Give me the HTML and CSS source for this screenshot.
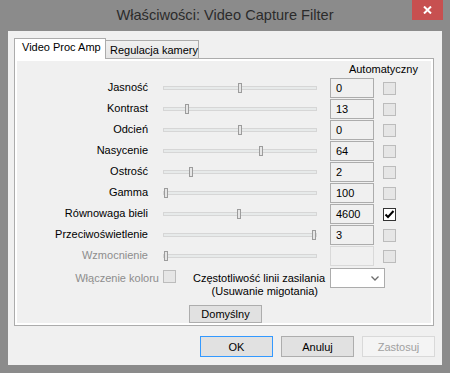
FILE: index.html
```html
<!DOCTYPE html>
<html>
<head>
<meta charset="utf-8"/>
<link rel="stylesheet" href="styles.css">
<title>Właściwości: Video Capture Filter</title>
</head>
<body>
<div class="window">
  <div class="titlebar">
    <span class="title">Właściwości: Video Capture Filter</span>
    <span class="close">
      <svg width="9" height="8" viewBox="0 0 9 8"><path d="M1 0.5 L8 7.5 M8 0.5 L1 7.5" stroke="#fff" stroke-width="2"/></svg>
    </span>
  </div>

  <div class="client">
    <div class="tabs">
      <div class="tab active">Video Proc Amp</div>
      <div class="tab">Regulacja kamery</div>
    </div>

    <div class="panel">
      <div class="page">
        <div class="autohead">Automatyczny</div>

        <div class="grid">
          <div class="lbl">Jasność</div>
          <div class="track"><span class="thumb" style="--p:0.5"></span></div>
          <div class="val">0</div>
          <div class="chk"></div>

          <div class="lbl">Kontrast</div>
          <div class="track"><span class="thumb" style="--p:0.14"></span></div>
          <div class="val">13</div>
          <div class="chk"></div>

          <div class="lbl">Odcień</div>
          <div class="track"><span class="thumb" style="--p:0.5"></span></div>
          <div class="val">0</div>
          <div class="chk"></div>

          <div class="lbl">Nasycenie</div>
          <div class="track"><span class="thumb" style="--p:0.64"></span></div>
          <div class="val">64</div>
          <div class="chk"></div>

          <div class="lbl">Ostrość</div>
          <div class="track"><span class="thumb" style="--p:0.17"></span></div>
          <div class="val">2</div>
          <div class="chk"></div>

          <div class="lbl">Gamma</div>
          <div class="track"><span class="thumb" style="--p:0"></span></div>
          <div class="val">100</div>
          <div class="chk"></div>

          <div class="lbl">Równowaga bieli</div>
          <div class="track"><span class="thumb" style="--p:0.49"></span></div>
          <div class="val">4600</div>
          <div class="chk checked">
            <svg width="11" height="11" viewBox="0 0 11 11"><path d="M1.5 5.5 L4 8 L9.5 2" fill="none" stroke="#000" stroke-width="2"/></svg>
          </div>

          <div class="lbl">Przeciwoświetlenie</div>
          <div class="track"><span class="thumb" style="--p:1"></span></div>
          <div class="val">3</div>
          <div class="chk"></div>

          <div class="lbl disabled">Wzmocnienie</div>
          <div class="track"><span class="thumb" style="--p:0"></span></div>
          <div class="val off"></div>
          <div class="chk"></div>
        </div>

        <div class="extra">
          <div class="colour">
            <span class="disabled">Włączenie koloru</span>
            <span class="chk"></span>
          </div>
          <div class="freq">Częstotliwość linii zasilania<br>(Usuwanie migotania)</div>
          <div class="combo">
            <svg width="8" height="5" viewBox="0 0 8 5"><path d="M0.5 0.5 L4 4 L7.5 0.5" fill="none" stroke="#6d6d6d" stroke-width="1.3"/></svg>
          </div>
        </div>

        <div class="defrow">
          <button class="btn small">Domyślny</button>
        </div>
      </div>
    </div>

    <div class="actions">
      <button class="btn default">OK</button>
      <button class="btn">Anuluj</button>
      <button class="btn off">Zastosuj</button>
    </div>
  </div>
</div>
</body>
</html>
```

FILE: styles.css
```css
body {
  margin: 0;
  font-family: "Liberation Sans", Arial, sans-serif;
  font-size: 11px;
  color: #000;
}

.window {
  position: relative;
  width: 450px;
  height: 373px;
  background: #8b8b8b;
}

.titlebar {
  height: 31px;
  text-align: center;
}
.title {
  font-size: 14.6px;
  line-height: 31px;
  color: #2b2b2b;
}
.close {
  position: absolute;
  top: 0;
  right: 7px;
  width: 31px;
  height: 20px;
  background: #c75050;
  display: flex;
  align-items: center;
  justify-content: center;
}

.client {
  box-sizing: border-box;
  margin: 0 8px;
  height: 334px;
  background: #f0f0f0;
  padding: 7px 7px 0 6px;
}

/* tabs */
.tabs {
  display: flex;
  align-items: flex-end;
  height: 20px;
}
.tab {
  box-sizing: border-box;
  height: 18px;
  width: 94px;
  margin-left: -1px;
  padding: 1px 0 0 4px;
  line-height: 16px;
  white-space: nowrap;
  border: 1px solid #acacac;
  border-bottom: none;
  background: linear-gradient(#f0f0f0, #e5e5e5);
}
.tab.active {
  position: relative;
  z-index: 1;
  width: 92px;
  height: 21px;
  margin-left: 0;
  margin-bottom: -1px;
  padding: 0 0 0 7px;
  line-height: 17px;
  background: #fff;
}

.panel {
  box-sizing: border-box;
  width: 420px;
  height: 268px;
  border: 1px solid #acacac;
  background: #fff;
  padding: 2px;
}
.page {
  height: 100%;
  background: #f0f0f0;
  padding-top: 1px;
  box-sizing: border-box;
}

.autohead {
  line-height: 14px;
  text-align: right;
  padding-right: 13px;
}

/* slider rows */
.grid {
  margin-top: 2px;
  display: grid;
  grid-template-columns: 146px 167px 53px 13px;
  grid-auto-rows: 20px;
  row-gap: 1px;
  align-items: center;
}
.lbl {
  text-align: right;
  padding-right: 15px;
  padding-bottom: 2px;
  line-height: 14px;
  white-space: nowrap;
}
.disabled { color: #8d8d8d; }

.track {
  position: relative;
  box-sizing: border-box;
  width: 154px;
  height: 4px;
  margin-top: -1px;
  border: 1px solid #d6d6d6;
  background: #e7eaea;
}
.thumb {
  position: absolute;
  top: -4px;
  left: calc((100% - 4px) * var(--p));
  box-sizing: border-box;
  width: 4px;
  height: 10px;
  border: 1px solid #9c9c9c;
  background: #e6e6e6;
}

.val {
  box-sizing: border-box;
  width: 44px;
  height: 20px;
  border: 1px solid #acacac;
  padding-left: 5px;
  line-height: 18px;
  background: #f0f0f0;
}
.val.off { border-color: #d9d9d9; }

.chk {
  display: block;
  box-sizing: border-box;
  width: 13px;
  height: 13px;
  border: 1px solid #bcbcbc;
  background: #e6e6e6;
}
.chk.checked {
  border-color: #333;
  background: #fff;
}
.chk svg { display: block; margin: 0; }

/* bottom of the page */
.extra {
  display: flex;
  margin-top: 2px;
  height: 30px;
}
.colour {
  width: 159px;
  display: flex;
  justify-content: flex-end;
  gap: 4px;
}
.colour span:first-child { padding-top: 4px; line-height: 13px; }
.colour .chk { margin-top: 2px; }
.freq {
  width: 125px;
  margin-left: 17px;
  padding-top: 4px;
  line-height: 13px;
  text-align: right;
  white-space: nowrap;
}
.combo {
  box-sizing: border-box;
  width: 55px;
  height: 20px;
  margin-left: 12px;
  border: 1px solid #acacac;
  background: #fff;
  display: flex;
  align-items: center;
  justify-content: flex-end;
  padding: 1px 5px 0 0;
}

.defrow {
  margin-top: 7px;
  padding-left: 172px;
}

/* buttons */
.btn {
  box-sizing: border-box;
  width: 73px;
  height: 21px;
  margin: 0;
  padding: 0;
  border: 1px solid #adadad;
  background: #e1e1e1;
  font: inherit;
  color: #000;
}
.btn.small { height: 18px; }
.btn.default { border-color: #3399ff; }
.btn.off {
  border-color: #d9d9d9;
  background: #f4f4f4;
  color: #a0a0a0;
}

.actions {
  display: flex;
  justify-content: flex-end;
  gap: 8px;
  margin-top: 10px;
}
```
